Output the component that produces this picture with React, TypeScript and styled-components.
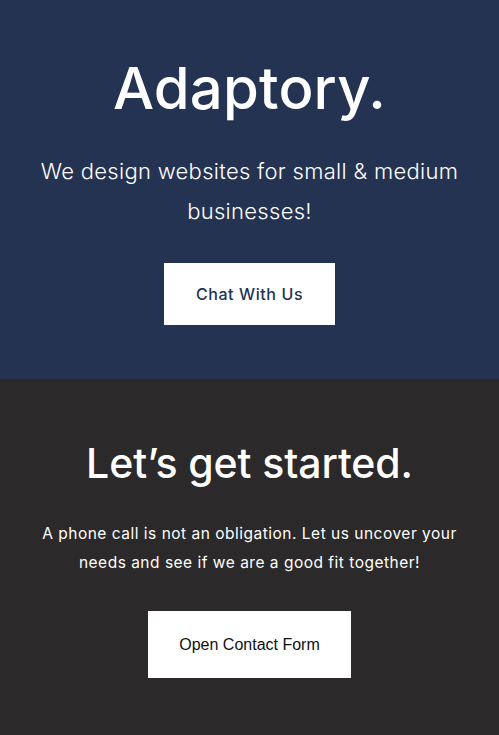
import styled, { createGlobalStyle } from "styled-components";

const GlobalStyle = createGlobalStyle`
  html, body {
    margin: 0;
    padding: 0;
  }
  body {
    font-family: "Inter", "Noto Sans", sans-serif;
    -webkit-font-smoothing: antialiased;
  }
`

const Section = styled.section<{ $bg: string }>`
  background-color: ${(p) => p.$bg};
  color: #FFF;
  display: flex;
  flex-direction: column;
  align-items: center;
  text-align: center;
`

const Hero = styled(Section)`
  height: 379px;
  box-sizing: border-box;
  padding-top: 52px;
`

const Contact = styled(Section)`
  height: 356px;
  box-sizing: border-box;
  padding-top: 58px;
`

const Brand = styled.h1`
  font-family: "Inter", sans-serif;
  font-size: 58px;
  font-weight: 500;
  letter-spacing: 0.2px;
  line-height: 72px;
  margin: 0;
`

const Tagline = styled.p`
  font-size: 22px;
  font-weight: 300;
  letter-spacing: 0.3px;
  line-height: 40px;
  margin: 27px 0 0;
  max-width: 440px;
`

const Heading = styled.h2`
  font-family: "Inter", sans-serif;
  font-size: 41px;
  font-weight: 500;
  letter-spacing: -0.1px;
  line-height: 52px;
  margin: 0;
`

const Lead = styled.p`
  font-size: 15.5px;
  font-weight: 400;
  letter-spacing: 0.5px;
  line-height: 29px;
  margin: 30px 0 0;
  max-width: 430px;
`

const Button = styled.button<{ $w: number; $h: number; $plain?: boolean }>`
  background-color: #FFF;
  border: none;
  border-radius: 0;
  color: ${(p) => (p.$plain ? "#111" : "#243352")};
  cursor: pointer;
  font-family: ${(p) => (p.$plain ? `"Liberation Sans", Arial, sans-serif` : `"Inter", sans-serif`)};
  font-size: 16px;
  font-weight: ${(p) => (p.$plain ? 400 : 500)};
  letter-spacing: ${(p) => (p.$plain ? 0 : 0.6)}px;
  height: ${(p) => p.$h}px;
  width: ${(p) => p.$w}px;
`

const App = () => {
  return (
    <>
      <GlobalStyle />
      <Hero $bg="#243352">
        <Brand>Adaptory.</Brand>
        <Tagline>We design websites for small &amp; medium businesses!</Tagline>
        <Button $w={171} $h={62} style={{ marginTop: 32 }}>Chat With Us</Button>
      </Hero>
      <Contact $bg="#2B2929">
        <Heading>Let’s get started.</Heading>
        <Lead>A phone call is not an obligation. Let us uncover your needs and see if we are a good fit together!</Lead>
        <Button $w={203} $h={67} $plain style={{ marginTop: 34 }}>Open Contact Form</Button>
      </Contact>
    </>
  )
}

export default App
